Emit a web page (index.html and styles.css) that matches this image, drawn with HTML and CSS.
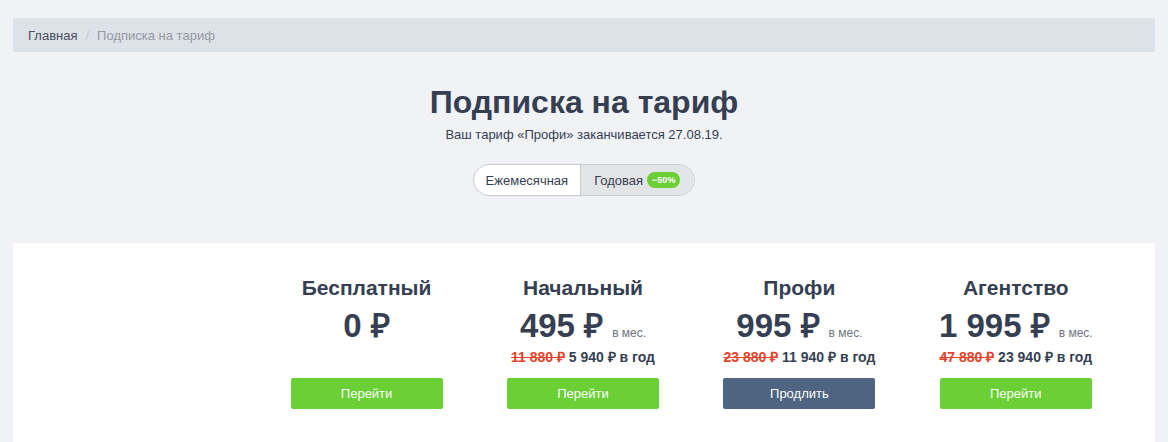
FILE: index.html
```html
<!DOCTYPE html>
<html lang="ru">
<head>
<meta charset="utf-8">
<link rel="stylesheet" href="styles.css">
</head>
<body>
<div class="page">
  <nav class="breadcrumb">
    <a class="crumb-link" href="#">Главная</a>
    <span class="crumb-sep">/</span>
    <span class="crumb-current">Подписка на тариф</span>
  </nav>

  <header class="head">
    <h1 class="title">Подписка на тариф</h1>
    <p class="subtitle">Ваш тариф «Профи» заканчивается 27.08.19.</p>
    <div class="toggle">
      <span class="toggle-opt">Ежемесячная</span>
      <span class="toggle-opt active">Годовая <span class="badge">−50%</span></span>
    </div>
  </header>

  <section class="card">
    <div class="plans">
      <div class="plan-empty"></div>
      <div class="plan">
        <div class="plan-name">Бесплатный</div>
        <div class="plan-price"><span class="amount">0 ₽</span></div>
        <div class="plan-year"></div>
        <button class="btn btn-green">Перейти</button>
      </div>
      <div class="plan">
        <div class="plan-name">Начальный</div>
        <div class="plan-price"><span class="amount">495 ₽</span><span class="per">в мес.</span></div>
        <div class="plan-year"><s class="old">11 880 ₽</s> 5 940 ₽ в год</div>
        <button class="btn btn-green">Перейти</button>
      </div>
      <div class="plan">
        <div class="plan-name">Профи</div>
        <div class="plan-price"><span class="amount">995 ₽</span><span class="per">в мес.</span></div>
        <div class="plan-year"><s class="old">23 880 ₽</s> 11 940 ₽ в год</div>
        <button class="btn btn-slate">Продлить</button>
      </div>
      <div class="plan">
        <div class="plan-name">Агентство</div>
        <div class="plan-price"><span class="amount">1 995 ₽</span><span class="per">в мес.</span></div>
        <div class="plan-year"><s class="old">47 880 ₽</s> 23 940 ₽ в год</div>
        <button class="btn btn-green">Перейти</button>
      </div>
    </div>
  </section>
</div>
</body>
</html>
```

FILE: styles.css
```css
* { box-sizing: border-box; }
html, body { margin: 0; padding: 0; }
body {
  background: #f0f2f6;
  font-family: "Liberation Sans", Arial, sans-serif;
  color: #363f52;
  overflow: hidden;
}
.page {
  padding: 18px 13px 0 13px;
}
.breadcrumb {
  height: 34px;
  background: #dde1e8;
  border-radius: 2px;
  padding: 0 15px;
  display: flex;
  align-items: center;
  font-size: 13px;
}
.crumb-link { color: #4a5160; text-decoration: none; }
.crumb-sep { color: #c4c8d0; margin: 0 8px; }
.crumb-current { color: #969aa3; }

.head {
  display: flex;
  flex-direction: column;
  align-items: center;
  padding-top: 30px;
  height: 191px;
}
.title {
  margin: 0;
  font-size: 32px;
  line-height: 40px;
  font-weight: bold;
  color: #363f52;
}
.subtitle {
  margin: 4px 0 0 0;
  font-size: 13px;
  line-height: 18px;
  color: #363f52;
}
.toggle {
  margin-top: 20px;
  display: flex;
  height: 32px;
  border: 1px solid #c9cbcf;
  border-radius: 16px;
  overflow: hidden;
  font-size: 13px;
  background: #fff;
}
.toggle-opt {
  display: flex;
  align-items: center;
  padding: 0 12px;
  color: #363f52;
}
.toggle-opt.active {
  background: #e3e4e6;
  border-left: 1px solid #c9cbcf;
  padding: 0 14px 0 13px;
}
.badge {
  margin-left: 4px;
  background: #6bcf36;
  color: #fff;
  font-size: 9px;
  font-weight: bold;
  border-radius: 8px;
  padding: 3px 5px;
  line-height: 10px;
}

.card {
  background: #fff;
  padding: 29px 31px 40px 29px;
}
.plans {
  display: grid;
  grid-template-columns: repeat(5, 1fr);
}
.plan {
  display: flex;
  flex-direction: column;
  align-items: center;
}
.plan-name {
  font-size: 21px;
  font-weight: bold;
  line-height: 30px;
  margin-top: 1px;
}
.plan-price {
  height: 40px;
  margin-top: 3px;
  display: flex;
  align-items: baseline;
}
.amount {
  font-size: 33px;
  font-weight: bold;
  line-height: 40px;
}
.per {
  font-size: 12px;
  color: #6f7480;
  margin-left: 9px;
}
.plan-year {
  height: 22px;
  margin-top: 0;
  font-size: 14px;
  font-weight: bold;
  line-height: 22px;
  color: #363f52;
}
.old {
  color: #e3432a;
  text-decoration: line-through;
}
.btn {
  margin-top: 10px;
  width: 152px;
  height: 31px;
  border: none;
  border-radius: 2px;
  color: #fff;
  font-family: "Liberation Sans", Arial, sans-serif;
  font-size: 13px;
  cursor: pointer;
}
.btn-green { background: #6bcf36; }
.btn-slate { background: #4e6480; }
```
